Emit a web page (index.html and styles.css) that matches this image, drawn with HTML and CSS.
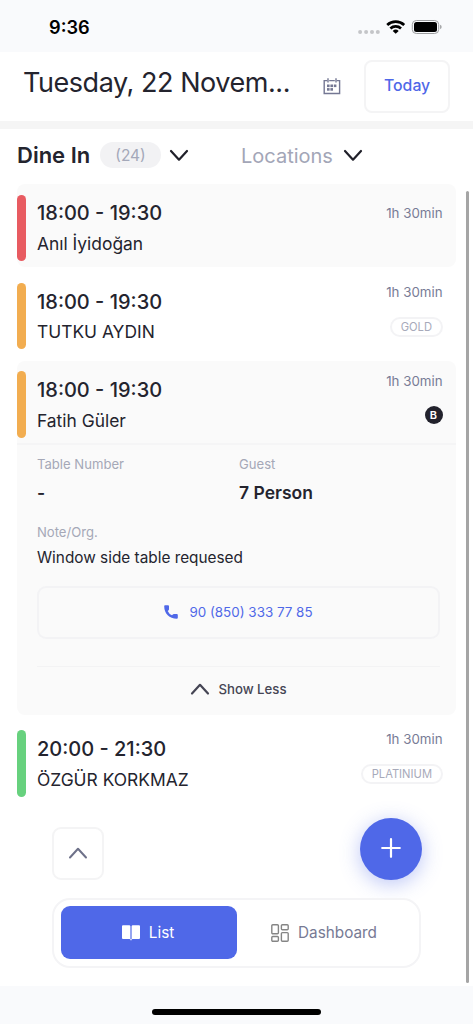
FILE: index.html
```
<!DOCTYPE html>
<html lang="en">
<head>
<meta charset="utf-8">
<meta name="viewport" content="width=device-width, initial-scale=1">
<title>Reservations</title>
<link rel="stylesheet" href="styles.css">
</head>
<body>
<div class="app">
  <div class="status">
    <span class="clock">9:36</span>
    <svg class="status-icons" width="86" height="20" viewBox="0 0 86 20">
      <g fill="#c4c5c8"><circle cx="3.1" cy="14" r="2"/><circle cx="9.1" cy="14" r="2"/><circle cx="15" cy="14" r="2"/><circle cx="20.8" cy="14" r="2"/></g>
      <g fill="none" stroke="#000" stroke-width="2.7"><path d="M30.2 6.9a12.4 12.4 0 0 1 17 0"/><path d="M33.4 10.5a7.7 7.7 0 0 1 10.6 0"/></g>
      <path d="M35.7 12.9a4.4 4.4 0 0 1 6 0l-3 2.9z" fill="#000"/>
      <rect x="55.3" y="2.5" width="26.4" height="13" rx="4" fill="none" stroke="#9c9d9f"/>
      <rect x="57" y="4.1" width="23" height="9.9" rx="2.5"/>
      <path d="M83.1 6.8q1.5.6 1.5 2.2t-1.5 2.2z" fill="#9c9d9f"/>
    </svg>
  </div>
  <header class="header">
    <h1 class="date">Tuesday, 22 Novem...</h1>
    <svg class="calendar" width="18" height="18" viewBox="0 0 18 18" fill="none" stroke="#747793" stroke-width="1.4">
      <path d="M4.1 2.6H1.2v12.9h15.4V2.6h-2.7M6.2 2.6h5.6M5 .2v4.400M13 .2v4.400"/>
      <g fill="#747793" stroke="none"><rect x="4" y="6.500" width="2.600" height="2.600"/><rect x="7.400" y="6.500" width="2.600" height="2.600"/><rect x="10.800" y="6.500" width="2.600" height="2.600"/><rect x="4" y="10.100" width="2.600" height="2.600"/><rect x="7.400" y="10.100" width="2.600" height="2.600"/></g>
    </svg>
    <button class="today">Today</button>
  </header>
  <div class="filters">
    <span class="filter-title">Dine In</span>
    <span class="count">(24)</span>
    <svg class="chevron" width="20" height="13" viewBox="0 0 20 13"><path d="M2 2l8 8.7L18 2"/></svg>
    <span class="locations">Locations</span>
    <svg class="chevron" width="20" height="13" viewBox="0 0 20 13"><path d="M2 2l8 8.7L18 2"/></svg>
  </div>
  <main class="list">
    <article class="card shaded">
      <div class="head single">
        <i class="mark red"></i>
        <div class="who"><b class="time">18:00 - 19:30</b><span class="name">Anıl İyidoğan</span></div>
        <div class="meta"><span class="duration">1h 30min</span></div>
      </div>
    </article>
    <article class="card">
      <div class="head">
        <i class="mark orange"></i>
        <div class="who"><b class="time">18:00 - 19:30</b><span class="name">TUTKU AYDIN</span></div>
        <div class="meta"><span class="duration">1h 30min</span><span class="tag">GOLD</span></div>
      </div>
    </article>
    <article class="card shaded">
      <div class="head">
        <i class="mark orange"></i>
        <div class="who"><b class="time">18:00 - 19:30</b><span class="name">Fatih Güler</span></div>
        <div class="meta"><span class="duration">1h 30min</span><span class="badge">B</span></div>
      </div>
      <div class="details">
        <div class="facts">
          <div><span class="label">Table Number</span><b class="value">-</b></div>
          <div><span class="label">Guest</span><b class="value">7 Person</b></div>
        </div>
        <span class="label">Note/Org.</span>
        <p class="note">Window side table requesed</p>
        <button class="phone">
          <svg width="14" height="14" viewBox="0 0 14 14"><path d="M1 .3h3q1 0 1 1v3q0 .6-.4.9l-.9.8q1.300 3 4.300 4.300l.8-.9q.4-.5 1-.5h3q1 0 1 1v2.800q0 1-1 1C5.500 13.700.2 8.500.2 1.200q0-.9.8-.9z" fill="#4f68e8"/></svg>
          <span>90 (850) 333 77 85</span>
        </button>
        <div class="less">
          <svg class="chevron" width="20" height="14" viewBox="0 0 20 14"><path d="M2 11.5l8-8.7 8 8.7"/></svg>
          <span>Show Less</span>
        </div>
      </div>
    </article>
    <article class="card last">
      <div class="head">
        <i class="mark green"></i>
        <div class="who"><b class="time">20:00 - 21:30</b><span class="name">ÖZGÜR KORKMAZ</span></div>
        <div class="meta"><span class="duration">1h 30min</span><span class="tag">PLATINIUM</span></div>
      </div>
    </article>
  </main>
  <div class="actions">
    <button class="up"><svg class="chevron" width="20" height="14" viewBox="0 0 20 14"><path d="M2 11.5l8-8.7 8 8.7"/></svg></button>
    <button class="add"><svg width="20" height="20" viewBox="0 0 20 20" stroke="#fff" stroke-width="2.2" stroke-linecap="round"><path d="M10 1.2v17.6M1.2 10h17.6"/></svg></button>
  </div>
  <nav class="tabs">
    <div class="tab active">
      <svg width="18" height="16" viewBox="0 0 18 16" fill="#fff"><path d="M1 .2h6.6l.8.7v13.6l-.8-.4H1q-1 0-1-1V1.2q0-1 1-1zM17 .2h-6.6l-.8.7v13.6l.8-.4H17q1 0 1-1V1.2q0-1-1-1z"/><path d="M8.4 14h1.2v1.2H8.4z"/></svg>
      <span>List</span>
    </div>
    <div class="tab">
      <svg width="18" height="18" viewBox="0 0 18 18" fill="none" stroke="#858585" stroke-width="1.4"><rect x=".8" y=".8" width="6.6" height="9" rx="1"/><rect x="10.4" y=".8" width="6.8" height="5" rx="1"/><rect x=".8" y="12.5" width="6.6" height="4.7" rx="1"/><rect x="10.4" y="8.6" width="6.8" height="8.6" rx="1"/></svg>
      <span>Dashboard</span>
    </div>
  </nav>
  <div class="home"><i></i></div>
  <i class="scrollbar"></i>
</div>
</body>
</html>
```
FILE: styles.css
```
* { box-sizing: border-box; }
body { margin: 0; background: #fff; font-family: Inter, "Liberation Sans", sans-serif; color: #24242e; }
button { font: inherit; background: none; padding: 0; }
svg { display: block; flex: none; }
.app { position: relative; width: 473px; height: 1024px; display: flex; flex-direction: column; overflow: hidden; }
.status { height: 52px; flex: none; background: #f9fafc; display: flex; justify-content: space-between; padding: 18px 30px 0 49px; }
.clock { font-size: 18.2px; line-height: 19px; font-weight: 600; color: #000; }
.header { height: 77px; flex: none; border-bottom: 8px solid #f5f5f5; display: flex; align-items: center; padding: 0 23px; }
.date { margin: 0; width: 301px; padding-bottom: 7px; font-size: 27px; line-height: 34px; font-weight: 400; letter-spacing: -.45px; white-space: nowrap; }
.calendar { margin-top: 1px; }
.today { width: 86px; height: 53px; margin-left: 23px; border: 2px solid #f4f4f5; border-radius: 8px; color: #4f68e8; font-size: 15.8px; line-height: 18px; padding-bottom: 1px; font-weight: 500; }
.filters { height: 55px; flex: none; display: flex; align-items: center; padding: 0 17px 3px; }
.filter-title { width: 83px; font-size: 22px; font-weight: 600; white-space: nowrap; }
.count { width: 61px; height: 26px; border-radius: 13px; background: #f2f2f4; color: #a4a8b9; font-size: 15.5px; line-height: 27px; text-align: center; margin-right: 8px; }
.locations { width: 93px; margin: 0 9px 0 52px; padding-top: 1px; font-size: 20px; color: #a3a6b7; }
.chevron { fill: none; stroke: #20202a; stroke-width: 2.2; stroke-linecap: round; stroke-linejoin: round; }
.list { margin-left: 17px; width: 439px; flex: none; }
.card { border-radius: 8px; margin-bottom: 5px; }
.shaded { background: #fafafa; }
.head { height: 83px; display: flex; padding: 10.5px 13.5px 0 0; }
.mark { width: 9px; height: 66.5px; border-radius: 4.5px; }
.red { background: #e85b61; }
.orange { background: #f2ad50; }
.green { background: #67d17e; }
.who { flex: 1; padding: 5px 0 0 11px; display: flex; flex-direction: column; }
.time { font-size: 20px; line-height: 28px; font-weight: 500; white-space: nowrap; }
.single .time { margin-top: -.5px; }
.name { font-size: 17.4px; line-height: 24px; margin-top: 4.5px; white-space: nowrap; }
.meta { display: flex; flex-direction: column; align-items: flex-end; }
.duration { font-size: 13.3px; line-height: 20px; margin-top: -.5px; color: #787c96; }
.last .duration { margin-top: -1px; }
.single .duration { margin-top: 8px; }
.tag { height: 20px; border: 2px solid #f3f3f5; border-radius: 10px; padding: 0 8.5px; font-size: 11.2px; line-height: 16px; color: #a7aaba; margin-top: 14.5px; }
.last .tag { margin-top: 15px; }
.badge { width: 18px; height: 18px; border-radius: 9px; background: #22222c; color: #fff; font-size: 11px; line-height: 18px; font-weight: 600; text-align: center; margin-top: 15.5px; }
.card:nth-child(2) { margin-bottom: 5.5px; }
.card:nth-child(3) .head { height: 82px; }
.details { border-top: 2px solid #f5f5f6; padding: 10px 16px 0 20px; height: 272px; }
.facts { display: grid; grid-template-columns: 202px 1fr; height: 68px; }
.label { display: block; font-size: 13.1px; line-height: 18px; color: #a5a8b7; }
.value { display: block; font-size: 17.5px; line-height: 24px; font-weight: 600; margin-top: 8.5px; }
.note { margin: 5px 0 16px; font-size: 15.35px; line-height: 24px; white-space: nowrap; }
.phone { width: 403px; height: 53px; border: 2px solid #f3f3f5; border-radius: 9px; display: flex; align-items: center; justify-content: center; gap: 11px; font-size: 13.4px; line-height: 18px; padding-bottom: 1px; color: #4f68e8; }
.less { width: 403px; height: 48px; margin-top: 27.5px; border-top: 1px solid #f3f3f4; display: flex; justify-content: center; align-items: center; gap: 8px; padding-bottom: 4px; font-size: 13.2px; font-weight: 500; color: #454554; }
.less .chevron { stroke: #454554; }
.actions { flex: none; height: 78px; margin-top: 10px; display: flex; justify-content: space-between; padding: 14px 51.5px 0 52px; }
.up { width: 52px; height: 53px; margin-top: -5px; border: 2px solid #f4f4f5; border-radius: 9px; display: grid; place-items: center; }
.up .chevron { stroke: #6e7189; stroke-width: 2; }
.add { width: 62px; height: 62px; margin-top: -14px; padding-bottom: 2px; border: 0; border-radius: 50%; background: #4f68e8; display: grid; place-items: center; box-shadow: 0 4px 20px rgba(79, 104, 232, .38); }
.tabs { position: relative; flex: none; width: 369px; height: 70px; margin: 2px 0 0 52px; border: 2px solid #f4f4f6; border-radius: 18px; background: #fff; display: flex; padding: 6.5px; font-size: 15.3px; color: #777a94; }
.tab { flex: 1; display: flex; align-items: center; justify-content: center; gap: 9px; padding-right: 1px; }
.tab.active { flex: 0 0 176px; background: #4f68e8; color: #fff; border-radius: 9px; }
.home { margin-top: auto; height: 38px; flex: none; background: #f9fafc; padding-top: 23px; }
.home i { display: block; width: 169px; height: 6px; border-radius: 3px; background: #000; margin: 0 auto; }
.scrollbar { position: absolute; left: 466px; top: 191px; width: 3px; height: 792px; border-radius: 2px; background: #a5a5a5; }
```
